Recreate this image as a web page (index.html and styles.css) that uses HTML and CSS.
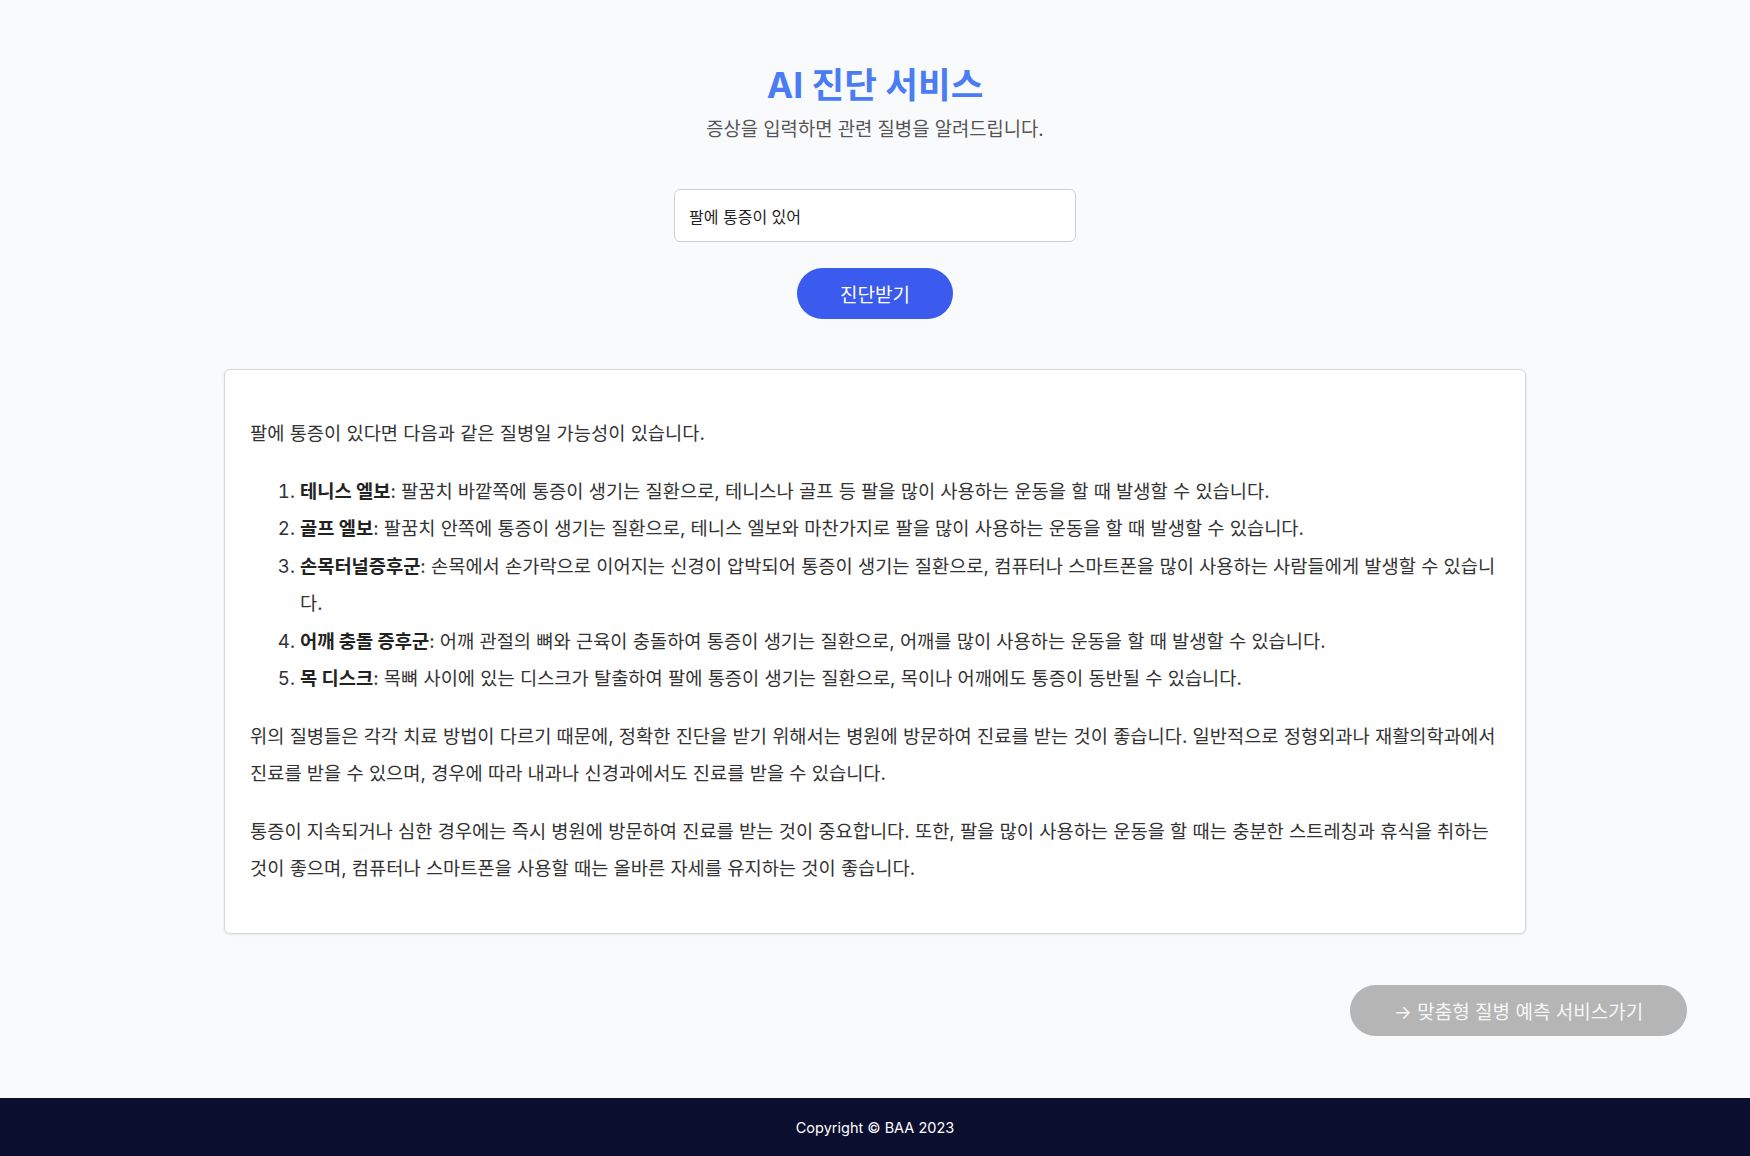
FILE: index.html
```html
<!DOCTYPE html>
<html lang="ko">
<head>
<meta charset="utf-8">
<title>AI 진단 서비스</title>
<link rel="stylesheet" href="styles.css">
</head>
<body>
<div class="page">
  <main class="main">
    <header class="hero">
      <h1 class="title">AI 진단 서비스</h1>
      <p class="subtitle">증상을 입력하면 관련 질병을 알려드립니다.</p>
    </header>
    <form class="ask">
      <input class="ask-input" type="text" value="팔에 통증이 있어">
      <button class="ask-btn" type="button">진단받기</button>
    </form>
    <section class="result">
      <p>팔에 통증이 있다면 다음과 같은 질병일 가능성이 있습니다.</p>
      <ol class="list">
        <li><strong>테니스 엘보</strong>: 팔꿈치 바깥쪽에 통증이 생기는 질환으로, 테니스나 골프 등 팔을 많이 사용하는 운동을 할 때 발생할 수 있습니다.</li>
        <li><strong>골프 엘보</strong>: 팔꿈치 안쪽에 통증이 생기는 질환으로, 테니스 엘보와 마찬가지로 팔을 많이 사용하는 운동을 할 때 발생할 수 있습니다.</li>
        <li><strong>손목터널증후군</strong>: 손목에서 손가락으로 이어지는 신경이 압박되어 통증이 생기는 질환으로, 컴퓨터나 스마트폰을 많이 사용하는 사람들에게 발생할 수 있습니다.</li>
        <li><strong>어깨 충돌 증후군</strong>: 어깨 관절의 뼈와 근육이 충돌하여 통증이 생기는 질환으로, 어깨를 많이 사용하는 운동을 할 때 발생할 수 있습니다.</li>
        <li><strong>목 디스크</strong>: 목뼈 사이에 있는 디스크가 탈출하여 팔에 통증이 생기는 질환으로, 목이나 어깨에도 통증이 동반될 수 있습니다.</li>
      </ol>
      <p>위의 질병들은 각각 치료 방법이 다르기 때문에, 정확한 진단을 받기 위해서는 병원에 방문하여 진료를 받는 것이 좋습니다. 일반적으로 정형외과나 재활의학과에서 진료를 받을 수 있으며, 경우에 따라 내과나 신경과에서도 진료를 받을 수 있습니다.</p>
      <p>통증이 지속되거나 심한 경우에는 즉시 병원에 방문하여 진료를 받는 것이 중요합니다. 또한, 팔을 많이 사용하는 운동을 할 때는 충분한 스트레칭과 휴식을 취하는 것이 좋으며, 컴퓨터나 스마트폰을 사용할 때는 올바른 자세를 유지하는 것이 좋습니다.</p>
    </section>
    <div class="next-row">
      <a class="next-btn" href="#">→ 맞춤형 질병 예측 서비스가기</a>
    </div>
  </main>
  <footer class="footer">Copyright © BAA 2023</footer>
</div>
</body>
</html>
```

FILE: styles.css
```css
* { box-sizing: border-box; }
html, body { margin: 0; padding: 0; }
body {
  background: #f9fafc;
  font-family: Inter, "Noto Sans CJK KR", sans-serif;
  color: #333;
}
.page {
  min-height: 1156px;
  display: flex;
  flex-direction: column;
}
.main {
  flex: 1;
  display: flex;
  flex-direction: column;
  align-items: center;
  padding-top: 62px;
}
.hero { text-align: center; }
.title {
  margin: 0;
  font-size: 35.5px;
  line-height: 48px;
  font-weight: 700;
  color: #4a7cf3;
}
.subtitle {
  margin: 6px 0 0;
  font-size: 18.8px;
  line-height: 28px;
  color: #555;
}
.ask {
  margin-top: 45px;
  display: flex;
  flex-direction: column;
  align-items: center;
}
.ask-input {
  width: 402px;
  height: 53px;
  border: 1px solid #cfcfd3;
  border-radius: 6px;
  background: #fff;
  padding: 0 14px;
  font-family: inherit;
  font-size: 16px;
  color: #222;
}
.ask-btn {
  margin-top: 26px;
  width: 156px;
  height: 51px;
  border: none;
  border-radius: 26px;
  background: #3a5bee;
  color: #fff;
  font-family: inherit;
  font-size: 19px;
}
.result {
  margin-top: 50px;
  width: 1302px;
  background: #fff;
  border: 1px solid #d6d6da;
  border-radius: 6px;
  box-shadow: 0 1px 3px rgba(0,0,0,0.08);
  padding: 25px 25px;
  font-size: 18.7px;
  line-height: 37.5px;
  color: #333;
}
.result p { margin: 20px 0; }
.result strong { font-weight: 700; color: #222; }
.list {
  margin: 20px 0;
  padding-left: 50px;
}
.next-row {
  width: 100%;
  display: flex;
  justify-content: flex-end;
  padding-right: 63px;
  margin-top: 51px;
}
.next-btn {
  display: flex;
  align-items: center;
  justify-content: center;
  width: 337px;
  height: 51px;
  border-radius: 26px;
  background: #b5b5b5;
  color: #f6f6f6;
  font-size: 19px;
  text-decoration: none;
}
.footer {
  height: 58px;
  background: #0a0e2f;
  color: #fff;
  font-size: 14.5px;
  display: flex;
  align-items: center;
  justify-content: center;
}
```
